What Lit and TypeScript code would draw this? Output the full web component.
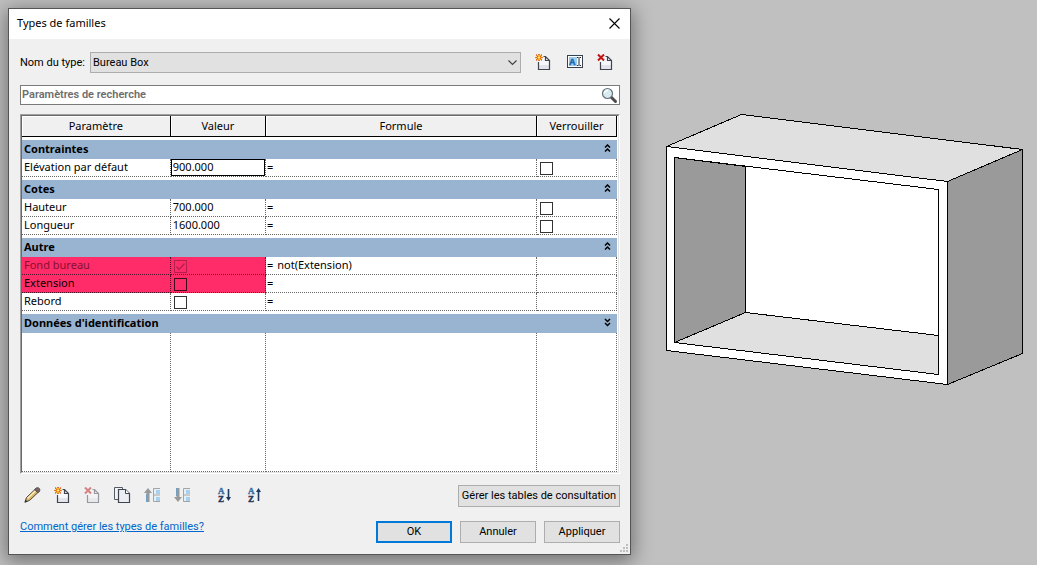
import { LitElement, html, svg, css, nothing } from "lit";
import { customElement, state } from "lit/decorators.js";
import { classMap } from "lit/directives/class-map.js";

interface Param {
  name: string;
  value: string | boolean;
  formula?: string;
  lockable?: boolean;
  marked?: boolean;
  disabled?: boolean;
  current?: boolean;
}

interface Group {
  title: string;
  open: boolean;
  params: Param[];
}

const star = svg`
  <path d="M4 0v7M.5 3.5h7M1.5 1l5 5M6.500 1l-5 5" stroke="#f2a300" stroke-width="1.300" />
  <path d="M3.500 0h1v1h-1zM3.500 6h1v1h-1zM.5 3h1v1h-1zM6.500 3h1v1h-1zM1 .5h1v1h-1zM6 .5h1v1h-1zM1 5.500h1v1h-1zM6 5.500h1v1h-1zM2.500 2h1v1h-1zM4.500 2h1v1h-1zM2.500 4h1v1h-1zM4.500 4h1v1h-1z" fill="#d8281a" />
  <rect x="3" y="2.500" width="2" height="2" fill="#fff27a" />`;

const page = (stroke: string) => svg`
  <path d="M3.5 6V15.5H14.5V6.5L10.5 2.5H8V6Z" fill="#f6f7fb" stroke="none" />
  <path d="M4 11H14V15H4Z" fill="#e2e4ec" />
  <path d="M3.500 8V15.500H14.500V6.500L10.500 2.500H8.500M10.500 2.500V6.500H14.500" fill="none" stroke=${stroke} stroke-width="1.200" />`;

const cross = svg`<path d="M1 .5l6 6M7 .5l-6 6" stroke="#c01414" stroke-width="2" />`;

const list = svg`
  <rect x="10" y="2" width="6" height="5" fill="#e4f0f8" />
  <rect x="10" y="9" width="6" height="5" fill="#e4f0f8" />
  <rect x="12" y="3" width="4" height="4" fill="#a9d0ec" />
  <rect x="12" y="10" width="4" height="4" fill="#a9d0ec" />
  <path d="M9.500 1.500H16M9.500 8H16M9.500 14.500H16M9.500 1.500V14.500" stroke="#a4a4a4" fill="none" />`;

const letters = svg`
  <text class="glyph" x="1" y="7" fill="#3f6ea5" stroke="#3f6ea5">A</text>
  <text class="glyph" x="1" y="15" fill="#1c3760" stroke="#1c3760">Z</text>`;

const icons: Record<string, unknown> = {
  add: svg`${page("#3f444f")}${star}`,
  remove: svg`${page("#3f444f")}${cross}`,
  removeOff: svg`<g opacity=".5">${page("#3f444f")}${cross}</g>`,
  rename: svg`
    <rect x="1.500" y="1.500" width="15" height="12" fill="#fff" stroke="#36404f" />
    <rect x="3" y="3" width="8" height="9" fill="#9ccbee" />
    <text class="glyph sans" x="3" y="11" fill="#1766ad" stroke="#1766ad">A</text>
    <path d="M11 3.500H12.500M13.500 3.500H15M13 4V11M11 11.500H12.500M13.500 11.500H15" stroke="#222" fill="none" />`,
  edit: svg`
    <path d="M1 15L2.500 10.500L12 1.500L15 4.500L5.500 13.500Z" fill="#d9b468" stroke="#4d4639" />
    <path d="M3.500 11.500L12 3.200" stroke="#fff0c4" stroke-width="1.500" />
    <path d="M10.500 2.700L12.500 .8H14.500L15.800 2V4L14 5.800Z" fill="#7b6468" stroke="#4a4650" stroke-width=".8" />
    <path d="M.5 15.800L1.500 12.500L3.700 14.700Z" fill="#34343a" />`,
  copy: svg`
    <path d="M.5 .5H8.500V3H4.500V12.500H.5Z" fill="#f2f3f7" stroke="#555b66" />
    <path d="M4.500 2.500H11.500L15.500 6.500V15.500H4.500Z" fill="#eceef4" stroke="#3f444f" stroke-width="1.200" />
    <path d="M11.500 2.500V6.500H15.500" fill="#fff" stroke="#3f444f" />`,
  up: svg`<path d="M0 6L4 1L8 6H5.500V15H2.500V6Z" fill="#999" /><path d="M2.500 7V15" stroke="#6f9fc2" />${list}`,
  down: svg`<path d="M0 10L4 15L8 10H5.500V1H2.500V10Z" fill="#999" /><path d="M2.500 1V9" stroke="#6f9fc2" />${list}`,
  az: svg`${letters}<path d="M11.500 2V12" stroke="#1c3760" stroke-width="1.600" /><path d="M9 10H14L11.500 14Z" fill="#1c3760" />`,
  za: svg`${letters}<path d="M11.500 4V14" stroke="#1c3760" stroke-width="1.600" /><path d="M9 5H14L11.500 1Z" fill="#1c3760" />`,
};

const tools: [string, string][] = [
  ["edit", "Modifier"],
  ["add", "Nouveau paramètre"],
  ["removeOff", "Supprimer le paramètre"],
  ["copy", "Dupliquer"],
  ["up", "Monter"],
  ["down", "Descendre"],
  ["az", "Trier par ordre croissant"],
  ["za", "Trier par ordre décroissant"],
];

const iconButton = (name: string, label: string, cls = "") => html`
  <button class="icon ${cls}" aria-label=${label}>
    <svg viewBox="0 0 17 17" width="17" height="17">${icons[name]}</svg>
  </button>`;

@customElement("app-root")
export class AppRoot extends LitElement {
  @state() private groups: Group[] = [
    {
      title: "Contraintes",
      open: true,
      params: [{ name: "Elévation par défaut", value: "900.000", lockable: true, current: true }],
    },
    {
      title: "Cotes",
      open: true,
      params: [
        { name: "Hauteur", value: "700.000", lockable: true },
        { name: "Longueur", value: "1600.000", lockable: true },
      ],
    },
    {
      title: "Autre",
      open: true,
      params: [
        { name: "Fond bureau", value: true, formula: "not(Extension)", marked: true, disabled: true },
        { name: "Extension", value: false, marked: true },
        { name: "Rebord", value: false },
      ],
    },
    { title: "Données d'identification", open: false, params: [] },
  ];

  static styles = css`
    :host {
      display: flex;
      height: 100vh;
      box-sizing: border-box;
      padding: 8px 0 10px 8px;
      background: #c0c0c0;
      color: #000;
      font: 11px/16px "Noto Sans", "Open Sans", sans-serif;
      overflow: hidden;
    }
    * {
      box-sizing: border-box;
    }
    button,
    input,
    select {
      font: inherit;
      color: inherit;
      margin: 0;
      padding: 0;
    }
    .dialog {
      position: relative;
      flex: 1 1 0;
      min-width: 0;
      display: flex;
      flex-direction: column;
      border: 1px solid #555;
      background: #f0f0f0;
      box-shadow: 0 4px 18px 2px rgba(0, 0, 0, 0.42);
    }
    .titlebar {
      flex: none;
      display: flex;
      align-items: center;
      justify-content: space-between;
      height: 30px;
      padding: 0 10px 2px 8px;
      background: #fff;
    }
    .title {
      margin: 0;
      font: inherit;
    }
    .close,
    .icon,
    .toggle,
    .find {
      display: block;
      border: 0;
      background: none;
      line-height: 0;
    }
    svg {
      display: block;
    }
    .glyph {
      font: 700 9px "Liberation Serif", serif;
      stroke-width: 0.4px;
    }
    .sans {
      font-family: "Liberation Sans", sans-serif;
    }
    .content {
      flex: 1;
      min-height: 0;
      display: flex;
      flex-direction: column;
      padding: 13px 10px 11px 11px;
    }
    .type,
    .query,
    .push,
    .help {
      font-family: Roboto, "Liberation Sans", sans-serif;
    }
    .type {
      display: flex;
      align-items: center;
      height: 21px;
      margin-bottom: 12px;
    }
    .type-label {
      flex: none;
      width: 70px;
      white-space: nowrap;
    }
    .combo {
      position: relative;
      flex: 1;
      height: 21px;
    }
    .select {
      appearance: none;
      width: 100%;
      height: 100%;
      padding: 0 2px;
      border: 1px solid #adadad;
      border-radius: 0;
      background: #e1e1e1;
    }
    .arrow {
      position: absolute;
      right: 4px;
      top: 8px;
      pointer-events: none;
    }
    .type-tools {
      display: flex;
      gap: 14px;
      padding: 0 6px 0 14px;
    }
    .search {
      flex: none;
      display: flex;
      align-items: center;
      height: 20px;
      margin-bottom: 9px;
      padding: 0 1px;
      border: 1px solid #7a7a7a;
      background: #fff;
    }
    .query {
      flex: 1;
      min-width: 0;
      height: 16px;
      border: 0;
      outline: 0;
      background: none;
    }
    .query::placeholder {
      color: #6d6d6d;
      font-weight: 600;
      opacity: 1;
    }
    .frame {
      flex: 1;
      min-height: 0;
      display: flex;
      border: 1px solid;
      border-color: #a0a0a0 #fff #fff #a0a0a0;
      margin-bottom: 11px;
    }
    .sheet {
      flex: 1;
      min-width: 0;
      display: flex;
      flex-direction: column;
      padding-right: 1px;
      border: 1px solid;
      border-color: #696969 #e3e3e3 #e3e3e3 #696969;
      background: #fff;
    }
    .params {
      flex: 1;
      width: 100%;
      table-layout: fixed;
      border-spacing: 0;
    }
    .col-name {
      width: 25%;
    }
    .col-value {
      width: 16%;
    }
    .col-lock {
      width: 80px;
    }
    .params th,
    .params td {
      padding: 0;
      font-weight: 400;
      text-align: left;
    }
    .params .head {
      height: 21px;
      border-right: 1px solid #000;
      border-bottom: 1px solid #000;
      background: #f0f0f0;
      box-shadow: inset 1px 1px #fff;
      line-height: 19px;
      text-align: center;
      vertical-align: top;
    }
    .params .band {
      height: 22px;
      padding: 0 6px 0 2px;
      border-top: 3px solid #fff;
      background: #99b4d1;
      font-weight: 700;
      line-height: 17px;
      vertical-align: top;
    }
    .band-row {
      display: flex;
      align-items: center;
      justify-content: space-between;
    }
    .params .cell {
      height: 18px;
      padding-left: 2px;
      border-right: 1px dotted #666;
      border-bottom: 1px dotted #666;
      line-height: 16px;
      white-space: nowrap;
      vertical-align: top;
    }
    .params .marked {
      background: #ff2c69;
      border-color: #58102a;
    }
    .params .off {
      color: #86102f;
    }
    .params .current {
      box-shadow: inset 0 0 0 1px #000;
    }
    .text {
      display: block;
      width: 100%;
      height: 16px;
      border: 0;
      outline: 0;
      background: none;
    }
    .params .calc {
      padding-left: 1px;
    }
    .formula {
      display: flex;
      gap: 4px;
    }
    .check {
      appearance: none;
      display: block;
      width: 13px;
      height: 13px;
      margin: 3px 0 0 1px;
      border: 1px solid #333;
      background: #fff;
    }
    .marked .check {
      background: none;
      border-color: #400c1c;
    }
    .off .check {
      border-color: #b61f4b;
    }
    .tick {
      display: grid;
      justify-content: start;
    }
    .tick > * {
      grid-area: 1 / 1;
    }
    .mark {
      margin: 3px 0 0 1px;
      pointer-events: none;
    }
    .filler {
      border-right: 1px dotted #666;
      border-bottom: 1px dotted #666;
    }
    .tools {
      flex: none;
      display: flex;
      align-items: flex-start;
      gap: 13px;
      height: 22px;
      margin-bottom: 14px;
      padding-left: 4px;
    }
    .tools .icon {
      padding-top: 2px;
    }
    .tools .apart {
      margin-left: 13px;
    }
    .push {
      height: 22px;
      min-width: 76px;
      border: 1px solid #adadad;
      background: #e1e1e1;
      text-align: center;
      line-height: 20px;
      white-space: nowrap;
    }
    .default {
      border: 2px solid #0078d7;
      line-height: 18px;
    }
    .lookup {
      min-width: 162px;
      margin-left: auto;
    }
    .footer {
      flex: none;
      display: flex;
      gap: 8px;
    }
    .help {
      margin-right: auto;
      line-height: 12px;
      color: #0066cc;
      text-decoration: underline;
    }
    .grip {
      position: absolute;
      right: 2px;
      bottom: 2px;
    }
    .scene {
      flex: 0 1 406px;
      padding: 106px 14px 0 35px;
    }
    .model {
      width: 100%;
      height: auto;
    }
  `;

  private toggle(group: Group) {
    this.groups = this.groups.map((g) => (g === group ? { ...g, open: !g.open } : g));
  }

  private renderValue(p: Param) {
    if (typeof p.value === "string") {
      return html`<input class="text" aria-label=${p.name} .value=${p.value} />`;
    }
    return html`<div class="tick">
      <input class="check" type="checkbox" aria-label=${p.name} .checked=${p.value} ?disabled=${p.disabled} />
      ${p.value
        ? html`<svg class="mark" width="13" height="13" viewBox="0 0 13 13">
            <path d="M2.500 6.500L5 9.500L10.500 3.500" fill="none" stroke="#b61f4b" stroke-width="1.300" />
          </svg>`
        : nothing}
    </div>`;
  }

  private renderParam(p: Param) {
    const tint = { marked: !!p.marked, off: !!p.disabled };
    return html`<tr>
      <th scope="row" class=${classMap({ cell: true, ...tint })}>${p.name}</th>
      <td class=${classMap({ cell: true, current: !!p.current, ...tint })}>${this.renderValue(p)}</td>
      <td class="cell calc">
        <div class="formula">
          <span>=</span>
          <input class="text" aria-label="Formule de ${p.name}" .value=${p.formula ?? ""} />
        </div>
      </td>
      <td class="cell">
        ${p.lockable
          ? html`<input class="check" type="checkbox" aria-label="Verrouiller ${p.name}" />`
          : nothing}
      </td>
    </tr>`;
  }

  private renderGroup(g: Group) {
    const d = g.open
      ? "M.5 3.500L3 1L5.500 3.500M.5 7.500L3 5L5.500 7.500"
      : "M.5 1L3 3.500L5.500 1M.5 5L3 7.500L5.500 5";
    return html`<tr>
        <th class="band" colspan="4" scope="colgroup">
          <div class="band-row">
            <span>${g.title}</span>
            <button class="toggle" aria-label=${g.title} aria-expanded=${g.open} @click=${() => this.toggle(g)}>
              <svg width="7" height="9" viewBox="0 0 6 9">
                <path d=${d} fill="none" stroke="#000" stroke-width="1.500" />
              </svg>
            </button>
          </div>
        </th>
      </tr>
      ${g.open ? g.params.map((p) => this.renderParam(p)) : nothing}`;
  }

  render() {
    return html`
      <section class="dialog" role="dialog" aria-labelledby="title">
        <header class="titlebar">
          <h1 class="title" id="title">Types de familles</h1>
          <button class="close" aria-label="Fermer">
            <svg width="11" height="11" viewBox="0 0 11 11">
              <path d="M.5 .5L10.500 10.500M10.500 .5L.5 10.500" stroke="#000" stroke-width="1.100" />
            </svg>
          </button>
        </header>
        <div class="content">
          <div class="type">
            <label class="type-label" for="type">Nom du type:</label>
            <div class="combo">
              <select class="select" id="type">
                <option>Bureau Box</option>
              </select>
              <svg class="arrow" width="9" height="6" viewBox="0 0 9 6">
                <path d="M.5 .5L4.500 4.500L8.500 .5" fill="none" stroke="#444" stroke-width="1.200" />
              </svg>
            </div>
            <div class="type-tools">
              ${iconButton("add", "Nouveau type")} ${iconButton("rename", "Renommer le type")}
              ${iconButton("remove", "Supprimer le type")}
            </div>
          </div>
          <div class="search">
            <input class="query" type="text" aria-label="Recherche" placeholder="Paramètres de recherche" />
            <button class="find" aria-label="Rechercher">
              <svg width="17" height="17" viewBox="0 0 17 17">
                <path d="M10 10L14.500 14.500" stroke="#4b4b4b" stroke-width="3" stroke-linecap="round" />
                <circle cx="6.500" cy="6.500" r="5" fill="#d8ecf0" stroke="#66727a" stroke-width="1.200" />
                <path d="M3.500 6A3 3 0 0 1 7 3.500" fill="none" stroke="#fff" stroke-width="1.500" />
              </svg>
            </button>
          </div>
          <div class="frame">
            <div class="sheet">
              <table class="params">
                <colgroup>
                  <col class="col-name" />
                  <col class="col-value" />
                  <col />
                  <col class="col-lock" />
                </colgroup>
                <thead>
                  <tr>
                    ${["Paramètre", "Valeur", "Formule", "Verrouiller"].map(
                      (h) => html`<th class="head" scope="col">${h}</th>`
                    )}
                  </tr>
                </thead>
                <tbody>
                  ${this.groups.map((g) => this.renderGroup(g))}
                  <tr>
                    ${[0, 1, 2, 3].map(() => html`<td class="filler"></td>`)}
                  </tr>
                </tbody>
              </table>
            </div>
          </div>
          <div class="tools">
            ${tools.map(([name, label]) => iconButton(name, label, name === "az" ? "apart" : ""))}
            <button class="push lookup">Gérer les tables de consultation</button>
          </div>
          <footer class="footer">
            <a class="help" href="#">Comment gérer les types de familles?</a>
            <button class="push default">OK</button>
            <button class="push">Annuler</button>
            <button class="push">Appliquer</button>
          </footer>
        </div>
        <svg class="grip" width="8" height="8" viewBox="0 0 8 8" fill="#bfbfbf">
          <path d="M6 0h2v2h-2zM3 3h2v2h-2zM6 3h2v2h-2zM0 6h2v2h-2zM3 6h2v2h-2zM6 6h2v2h-2z" />
        </svg>
      </section>
      <main class="scene">
        <svg class="model" viewBox="0 0 357 271" shape-rendering="crispEdges" stroke="#000" stroke-linejoin="round">
          <path d="M.5 32.500L75.500 .5L356.500 35.500L281.500 67.500Z" fill="#e0e0e0" />
          <path d="M281.500 67.500L356.500 35.500V239.500L281.500 270.500Z" fill="#9a9a9a" />
          <path d="M.5 32.500L281.500 67.500V270.500L.5 236.500Z" fill="#fff" />
          <path d="M8.500 43.500L79.500 52.500V198.500L8.500 228.500Z" fill="#9a9a9a" />
          <path d="M8.500 228.500L79.500 198.500L272.500 221.500V260.500Z" fill="#e0e0e0" />
          <path d="M8.500 43.500L272.500 75.500V260.500L8.500 228.500Z" fill="none" />
        </svg>
      </main>
    `;
  }
}
